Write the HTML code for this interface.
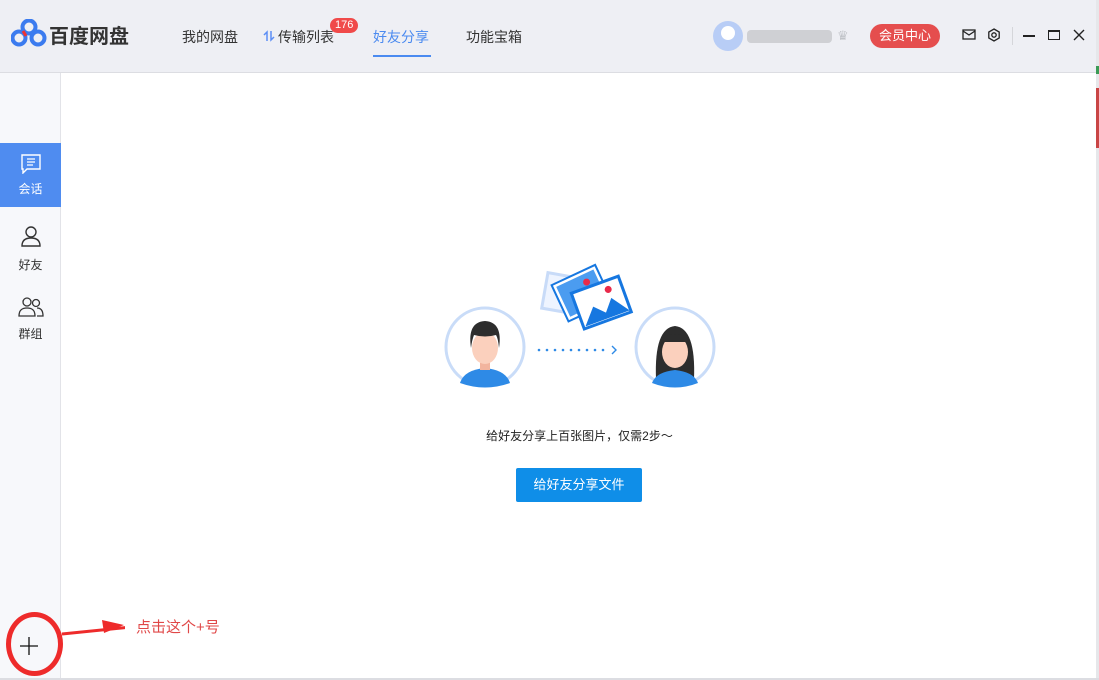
<!DOCTYPE html>
<html><head><meta charset="utf-8"><style>
*{margin:0;padding:0;box-sizing:border-box}
body{width:1099px;height:680px;overflow:hidden;background:#fff;font-family:"Liberation Sans","Noto Sans CJK SC",sans-serif;position:relative;color:#333}
.hdr{position:absolute;left:0;top:0;width:1096px;height:73px;background:#eeeff4;border-bottom:1px solid #dcdde2}
.nav{position:absolute;top:27px;font-size:14px;color:#333}
.side{position:absolute;left:0;top:73px;width:61px;height:605px;background:#f7f8fb;border-right:1px solid #e2e3e8}
.si{position:absolute;left:0;width:61px;text-align:center;font-size:12px;color:#333}
.abs{position:absolute}
</style></head><body>
<div class="hdr">
 <svg class="abs" style="left:11px;top:19px" width="36" height="28" viewBox="0 0 36 28">
  <circle cx="18" cy="8" r="6.5" fill="none" stroke="#3b7bef" stroke-width="4"/>
  <circle cx="8" cy="19" r="6.5" fill="none" stroke="#3b7bef" stroke-width="4"/>
  <circle cx="27" cy="19" r="6.5" fill="none" stroke="#3b7bef" stroke-width="4"/>
  <path d="M12 12 L15 17" stroke="#e33" stroke-width="3"/>
 </svg>
 <div class="abs" style="left:49px;top:20px;font-size:20px;font-weight:bold;color:#333">百度网盘</div>
 <div class="nav" style="left:182px">我的网盘</div>
 <svg class="abs" style="left:263px;top:30px" width="12" height="12"><path d="M4 11V2L1 5M8 1V10L11 7" fill="none" stroke="#5b8ef5" stroke-width="1.5"/></svg>
 <div class="nav" style="left:278px">传输列表</div>
 <div class="abs" style="left:330px;top:18px;background:#f04a4a;color:#fff;font-size:11px;border-radius:8px;padding:0 5px;height:15px;line-height:15px">176</div>
 <div class="nav" style="left:373px;color:#4a8af0">好友分享</div>
 <div class="abs" style="left:373px;top:55px;width:58px;height:2px;background:#4a8af0"></div>
 <div class="nav" style="left:466px">功能宝箱</div>
 <div class="abs" style="left:713px;top:21px;width:30px;height:30px;border-radius:50%;background:#b8cdf6"></div>
 <div class="abs" style="left:721px;top:26px;width:14px;height:14px;border-radius:50%;background:#fff"></div>
 <div class="abs" style="left:747px;top:30px;width:85px;height:13px;background:#cfd0d4;border-radius:4px"></div>
 <div class="abs" style="left:837px;top:28px;color:#c0c3c8;font-size:13px">♛</div>
 <div class="abs" style="left:870px;top:24px;width:70px;height:24px;border-radius:12px;background:#e54e4e;color:#fff;font-size:13px;text-align:center;line-height:24px">会员中心</div>
 <svg class="abs" style="left:962px;top:29px" width="14" height="12"><rect x="1" y="1" width="12" height="9" fill="none" stroke="#222" stroke-width="1.3"/><path d="M1 2 L7 6 L13 2" fill="none" stroke="#222" stroke-width="1.3"/></svg>
 <svg class="abs" style="left:987px;top:28px" width="14" height="14"><path d="M7 1 L12.2 4 L12.2 10 L7 13 L1.8 10 L1.8 4Z" fill="none" stroke="#222" stroke-width="1.3"/><circle cx="7" cy="7" r="2.2" fill="none" stroke="#222" stroke-width="1.3"/></svg>
 <div class="abs" style="left:1012px;top:27px;width:1px;height:18px;background:#d5d6da"></div>
 <div class="abs" style="left:1023px;top:35px;width:12px;height:1.5px;background:#222"></div>
 <div class="abs" style="left:1048px;top:30px;width:12px;height:10px;border:1.5px solid #222;border-top-width:2.5px"></div>
 <svg class="abs" style="left:1073px;top:29px" width="12" height="12"><path d="M1 1L11 11M11 1L1 11" stroke="#222" stroke-width="1.4"/></svg>
</div>
<div class="abs" style="left:1096px;top:0;width:3px;height:680px;background:#e6e7ea"></div>
<div class="abs" style="left:1096px;top:88px;width:3px;height:60px;background:#c94545"></div>
<div class="abs" style="left:1096px;top:66px;width:3px;height:8px;background:#3a9b55"></div>
<div class="side">
 <div class="si" style="top:70px;height:64px;background:#4f8cf0;color:#fff">
  <svg style="margin-top:11px" width="22" height="20" viewBox="0 0 22 20"><path d="M2 1H20V15H7L3 19V15H2Z" fill="none" stroke="#fff" stroke-width="1.4"/><path d="M7 5H15M7 8H15M7 11H13" stroke="#fff" stroke-width="1.2"/></svg>
  <div style="margin-top:3px">会话</div></div>
 <div class="si" style="top:152px">
  <svg width="22" height="22" viewBox="0 0 22 22"><circle cx="11" cy="7" r="5" fill="none" stroke="#333" stroke-width="1.4"/><path d="M2 21C2 15 6 13 11 13S20 15 20 21Z" fill="none" stroke="#333" stroke-width="1.4"/></svg>
  <div style="margin-top:6px">好友</div></div>
 <div class="si" style="top:224px">
  <svg width="26" height="20" viewBox="0 0 26 20"><circle cx="9" cy="5" r="4" fill="none" stroke="#333" stroke-width="1.3"/><path d="M1 19C1 13 4 11 9 11S17 13 17 19Z" fill="none" stroke="#333" stroke-width="1.3"/><circle cx="18" cy="6" r="3.5" fill="none" stroke="#333" stroke-width="1.3"/><path d="M19 11C23 11 25 14 25 19H19" fill="none" stroke="#333" stroke-width="1.3"/></svg>
  <div style="margin-top:5px">群组</div></div>
</div>
<div class="abs" style="left:0;top:678px;width:1099px;height:2px;background:#dcdde2"></div>
<div class="abs" style="left:6px;top:612px;width:57px;height:64px;border:5px solid #ee2b2b;border-radius:50%"></div>
<svg class="abs" style="left:19px;top:636px" width="20" height="20"><path d="M10 1V19M1 10H19" stroke="#111" stroke-width="1.3"/></svg>
<svg class="abs" style="left:60px;top:615px" width="65" height="25"><path d="M2 19 L100 9" stroke="#ee2b2b" stroke-width="3"/><path d="M42 5 L64 10 L44 18Z" fill="#ee2b2b"/></svg>
<div class="abs" style="left:136px;top:616px;font-size:15px;color:#e04848">点击这个+号</div>
<svg class="abs" style="left:440px;top:262px" width="280" height="130" viewBox="0 0 280 130">
 <g transform="rotate(10 125 35)"><rect x="104" y="14" width="44" height="36" fill="#eef4ff" stroke="#c8dbf8" stroke-width="3"/><circle cx="114" cy="25" r="3" fill="#f5a8b8"/></g>
 <g transform="rotate(-25 140 32)"><rect x="120" y="14" width="44" height="36" fill="#4b9cf0" stroke="#fff" stroke-width="3"/><rect x="118" y="12" width="48" height="40" fill="none" stroke="#1677e0" stroke-width="2"/><circle cx="151" cy="24" r="3.5" fill="#e82a4a"/></g>
 <g transform="rotate(-20 160 40)"><rect x="136" y="22" width="50" height="38" fill="#fff" stroke="#1677e0" stroke-width="3"/><path d="M138 58 L152 42 L162 52 L172 40 L185 58Z" fill="#1677e0"/><circle cx="172" cy="31" r="3.5" fill="#e82a4a"/></g>
 <circle cx="45" cy="85" r="39" fill="#fff" stroke="#c9dcf8" stroke-width="3"/>
 <path d="M20 121 Q24 108 45 106 Q66 108 70 121 Q45 130 20 121Z" fill="#2e8ae6"/>
 <rect x="40" y="96" width="10" height="12" fill="#f2b49e"/>
 <ellipse cx="45" cy="86" rx="13" ry="16" fill="#fbd0bd"/>
 <path d="M31 86 Q27 60 45 59 Q63 60 59 86 Q58 76 56 73 Q45 76 34 73 Q32 78 31 86Z" fill="#2d2d2d"/>
 <circle cx="235" cy="85" r="39" fill="#fff" stroke="#c9dcf8" stroke-width="3"/>
 <path d="M216 117 Q214 66 235 64 Q256 66 254 117Z" fill="#2d2d2d"/>
 <path d="M212 121 Q216 110 235 108 Q254 110 258 121 Q235 130 212 121Z" fill="#2e8ae6"/>
 <ellipse cx="235" cy="90" rx="13" ry="16" fill="#fbd0bd"/>
 <path d="M221 86 Q222 72 235 72 Q248 72 249 86 Q248 80 248 80 L222 80Z" fill="#2d2d2d"/>
 <g fill="#2e8ae6"><circle cx="99" cy="88" r="1.3"/><circle cx="107" cy="88" r="1.3"/><circle cx="115" cy="88" r="1.3"/><circle cx="123" cy="88" r="1.3"/><circle cx="131" cy="88" r="1.3"/><circle cx="139" cy="88" r="1.3"/><circle cx="147" cy="88" r="1.3"/><circle cx="155" cy="88" r="1.3"/><circle cx="163" cy="88" r="1.3"/></g>
 <path d="M172 84 L176 88 L172 92" fill="none" stroke="#2e8ae6" stroke-width="1.4"/>
</svg>
<div class="abs" style="left:0;width:1159px;top:427px;text-align:center;font-size:12px;color:#222">给好友分享上百张图片，仅需2步～</div>
<div class="abs" style="left:516px;top:468px;width:126px;height:34px;background:#0f8ee8;color:#fff;font-size:13px;text-align:center;line-height:34px;border-radius:2px">给好友分享文件</div>
</body></html>
